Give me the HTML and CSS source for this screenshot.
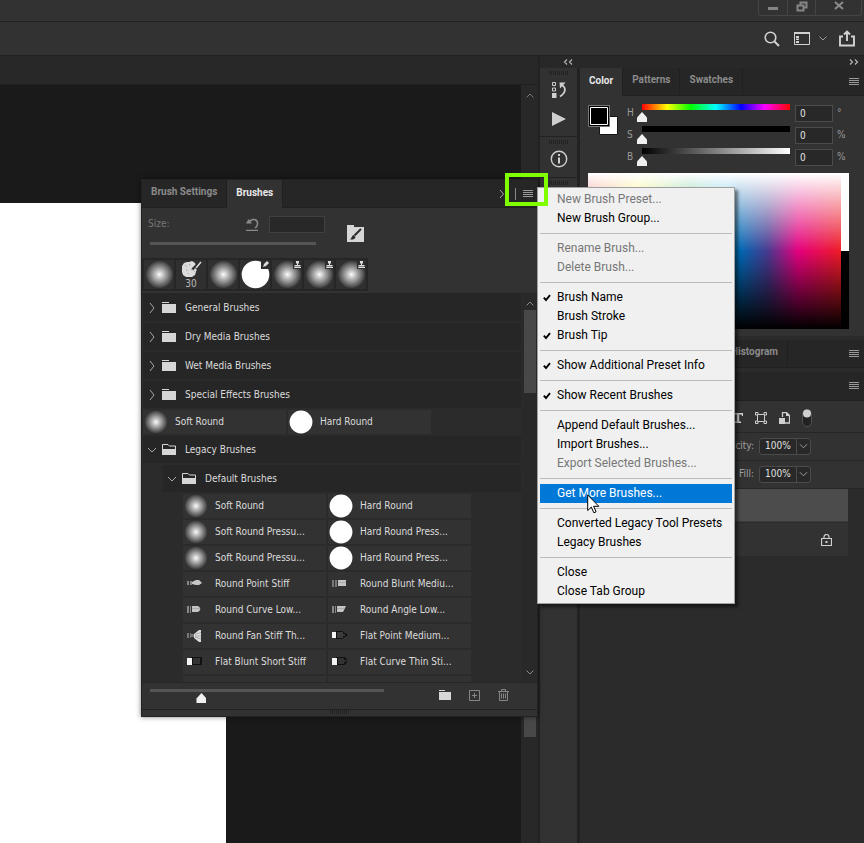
FILE: index.html
```html
<!DOCTYPE html>
<html lang="en">
<head>
<meta charset="utf-8">
<title>Brushes</title>
<link rel="stylesheet" href="styles.css">
</head>
<body>
<svg class="defs" aria-hidden="true">
  <defs>
    <radialGradient id="soft"><stop offset="0" stop-color="#fff"/><stop offset=".15" stop-color="#ddd"/><stop offset=".6" stop-color="#888"/><stop offset="1" stop-color="#3c3c3c"/></radialGradient>
    <symbol id="lines" viewBox="0 0 10 8"><path d="M0 .5h10M0 2.5h10M0 4.5h10M0 6.5h10" stroke="#9a9a9a" fill="none"/></symbol>
    <symbol id="folder" viewBox="0 0 14 12"><path d="M0 2h14v9H0z" fill="#d6d6d6"/><path d="M0 .5h7" stroke="#d6d6d6"/></symbol>
    <symbol id="folder-open" viewBox="0 0 14 12"><path d="M.5 5.500V.5H6l1.500 1.500h6v4" fill="none" stroke="#d6d6d6"/><path d="M0 5h14v6H0z" fill="#d6d6d6"/></symbol>
    <symbol id="right" viewBox="0 0 6 10"><path d="M1 0l4 5-4 5" fill="none" stroke="#a8a8a8"/></symbol>
    <symbol id="down" viewBox="0 0 10 6"><path d="M1 1l4 4 4-4" fill="none" stroke="#a8a8a8"/></symbol>
    <symbol id="check" viewBox="0 0 8 8"><path d="M.8 3.600L3 6l4-4.800" fill="none" stroke="#000" stroke-width="1.900"/></symbol>
    <symbol id="ball" viewBox="0 0 30 30"><circle cx="15" cy="15" r="14" fill="url(#soft)"/></symbol>
    <symbol id="disc" viewBox="0 0 30 30"><circle cx="15" cy="15" r="14.300" fill="#fff"/></symbol>
    <symbol id="stamp" viewBox="0 0 9 9"><path d="M0 0h9v9H0z" fill="#2e2e2e"/><path d="M3 1h3v2l-1 1v1h2.500v1.500h-6V5H4V4L3 3zM1 7h7v1H1z" fill="#ddd"/></symbol>
    <symbol id="dual" viewBox="0 0 10 6"><path d="M1 .5L3.500 3 1 5.500M6 .5L8.500 3 6 5.500" fill="none" stroke="#b5b5b5" stroke-width="1.200"/></symbol>
  </defs>
</svg>

<header class="titlebar">
  <div class="win">
    <button aria-label="Minimize"><svg width="12" height="10"><path d="M1 6h10v3H1z" fill="#858585"/></svg></button>
    <button aria-label="Restore"><svg width="12" height="11"><path d="M4.500 4V1.500h6v5H8M1.500 4.500h6v5h-6z" fill="none" stroke="#858585" stroke-width="2"/></svg></button>
    <button aria-label="Close"><svg width="10" height="10"><path d="M1 1l8 7M9 1L1 8" stroke="#8b8b8b" stroke-width="2"/></svg></button>
  </div>
</header>
<div class="options">
  <button aria-label="Search"><svg width="16" height="16"><circle cx="6.500" cy="6.500" r="5.300" fill="none" stroke="#d2d2d2" stroke-width="1.600"/><path d="M10.500 10.500L15 15" stroke="#d2d2d2" stroke-width="2"/></svg></button>
  <button aria-label="Workspace"><svg width="16" height="13"><path d="M.5.5h15v12H.5z" fill="none" stroke="#d2d2d2"/><path d="M0 0h16v2H0zM2 4h3v2H2zM2 6.500h3v1.500H2zM2 9h3v2H2z" fill="#d2d2d2"/></svg></button>
  <button aria-label="Workspace list" class="tight"><svg width="8" height="5"><path d="M.5.5L4 4 7.500.5" fill="none" stroke="#9b9b9b"/></svg></button>
  <button aria-label="Share"><svg width="16" height="17"><path d="M4 6.500H1V15.500h14V6.500h-3M8 11V2M5 4.500L8 1.500l3 3" fill="none" stroke="#d2d2d2" stroke-width="1.900"/></svg></button>
</div>

<div class="workspace">
  <main class="doc">
    <div class="doctabs"></div>
    <div class="stage">
      <div class="paste"><div class="canvas"></div></div>
      <div class="vscroll"><svg width="8" height="5"><path d="M.5 4.500L4 1l3.500 3.500" fill="none" stroke="#777"/></svg><i></i></div>
    </div>
  </main>

  <div class="side">
    <div class="sidehead">
      <button aria-label="Expand"><svg class="flip" width="10" height="6"><use href="#dual"/></svg></button>
      <button aria-label="Collapse"><svg width="10" height="6"><use href="#dual"/></svg></button>
    </div>
    <div class="sidebody">
      <nav class="dock">
        <div class="dockgroup">
          <span class="grip"></span>
          <button aria-label="History"><svg width="16" height="18"><path d="M1.500 1.500h3v3h-3zM1.500 7h3v3h-3z" fill="none" stroke="#cfcfcf"/><path d="M1 12h4.500v5H1zM8.500 1.500h6L9 7.500z" fill="#cfcfcf"/><path d="M10.500 4c4.500 2 5 7.500-1.500 11.500" fill="none" stroke="#cfcfcf" stroke-width="1.800"/></svg></button>
          <button aria-label="Actions"><svg width="14" height="14"><path d="M0 0l14 7-14 7z" fill="#cfcfcf"/></svg></button>
        </div>
        <div class="dockgroup">
          <span class="grip"></span>
          <button aria-label="Info"><svg width="18" height="18"><circle cx="9" cy="9" r="7.700" fill="none" stroke="#cfcfcf" stroke-width="1.400"/><path d="M8 4h2v2H8zM8 7.500h2v6H8z" fill="#cfcfcf"/></svg></button>
        </div>
        <div class="dockgroup"><span class="grip"></span></div>
      </nav>

      <aside class="panels">
        <div class="tabs">
          <button class="tab on">Color</button><button class="tab">Patterns</button><button class="tab">Swatches</button>
          <button class="more" aria-label="Panel menu"><svg width="10" height="8"><use href="#lines"/></svg></button>
        </div>
        <section class="color">
          <div class="hsb">
            <svg class="swatch" width="32" height="32"><path d="M11.500 11.500h18v18h-18z" fill="#fff" stroke="#161616"/><path d="M.5.5h21v21H.5z" fill="#000" stroke="#777"/><path d="M2.500 2.500h17v17h-17z" fill="#000" stroke="#fff"/></svg>
            <div class="rows">
              <div class="row"><label for="h">H</label><input id="h" class="hue" type="range" value="0"><input type="text" value="0" aria-label="Hue"><span>°</span></div>
              <div class="row"><label for="s">S</label><input id="s" class="sat" type="range" value="0"><input type="text" value="0" aria-label="Saturation"><span>%</span></div>
              <div class="row"><label for="b">B</label><input id="b" class="bri" type="range" value="0"><input type="text" value="0" aria-label="Brightness"><span>%</span></div>
            </div>
          </div>
          <div class="picker"><div class="spectrum"></div><div class="bw"></div></div>
        </section>
        <div class="tabs second">
          <button class="tab hist">Histogram</button>
          <button class="more" aria-label="Panel menu"><svg width="10" height="8"><use href="#lines"/></svg></button>
        </div>
        <div class="tabs third">
          <button class="more" aria-label="Panel menu"><svg width="10" height="8"><use href="#lines"/></svg></button>
        </div>
        <section class="layers">
          <div class="filters">
            <svg width="10" height="10"><path d="M0 0h10v3H9L8.500 1.500H6.200V8.500H8V10H2V8.500h1.800V1.500H1.500L1 3H0z" fill="#cfcfcf"/></svg>
            <svg width="12" height="12"><path d="M2.500 2.500h7v7h-7z" fill="none" stroke="#cfcfcf"/><path d="M.5.5h2.500v2.500H.5zM9 .5h2.500v2.500H9zM.5 9h2.500v2.500H.5zM9 9h2.500v2.500H9z" fill="#323232" stroke="#cfcfcf"/></svg>
            <svg width="11" height="12"><path d="M3.500 5V.5h4l3 3v7.500H6" fill="none" stroke="#cfcfcf" stroke-width="1.300"/><path d="M0 6h6v6H0zM7 0v4h4z" fill="#cfcfcf"/></svg>
            <svg width="10" height="18"><rect x=".5" y=".5" width="9" height="17" rx="4.500" fill="#222" stroke="#505050"/><circle cx="5" cy="4.500" r="4" fill="#d0d0d0"/></svg>
          </div>
          <div class="amount"><label for="op">Opacity:</label><div class="combo"><input id="op" type="text" value="100%"><button aria-label="Opacity slider"><svg width="9" height="6"><use href="#down"/></svg></button></div></div>
          <div class="amount"><label for="fi">Fill:</label><div class="combo"><input id="fi" type="text" value="100%"><button aria-label="Fill slider"><svg width="9" height="6"><use href="#down"/></svg></button></div></div>
          <div class="layerlist">
            <div class="layer sel"></div>
            <div class="layer"><svg width="11" height="12"><path d="M.5 4.500h10v7H.5zM3 4.500V3a2.500 2.500 0 0 1 5 0v1.500" fill="none" stroke="#d0d0d0" stroke-width="1.200"/><path d="M4.500 7h2v2h-2z" fill="#d0d0d0"/></svg></div>
          </div>
        </section>
      </aside>
    </div>
  </div>
</div>

<section class="brushes">
  <div class="tabs">
    <button class="tab">Brush Settings</button><button class="tab on">Brushes</button>
    <div class="tools"><svg width="9" height="8" viewBox="0 0 9 8"><path d="M1 0l3.500 4L1 8M6.500 1.500V2M6.500 6v.5" fill="none" stroke="#a8a8a8"/></svg><b></b><button aria-label="Brushes menu"><svg width="10" height="8"><use href="#lines"/></svg></button></div>
  </div>
  <div class="size">
    <div class="sizeleft">
      <div class="sizerow"><label for="sz">Size:</label><svg width="13" height="13"><path d="M2.500 4.500C6-.5 12 1 11.500 6c0 2-1 3-2.500 4M0 12.500h12" fill="none" stroke="#8a8a8a" stroke-width="1.500"/><path d="M0 5.500h6L2.500 1z" fill="#8a8a8a"/></svg><input id="sz" type="text" disabled></div>
      <div class="bar"></div>
    </div>
    <button aria-label="Toggle brush settings"><svg width="17" height="18"><path d="M0 1h7v2h10v15H0z" fill="#d6d6d6"/><path d="M14 5L7.500 11.500" stroke="#2c2c2c" stroke-width="2"/><path d="M3 15.500c2 0 5 .5 5.500-2.500L6.500 11c-2 .5-1.500 3-3.500 4.500z" fill="#2c2c2c"/></svg></button>
  </div>
  <div class="recent">
    <button aria-label="Soft Round"><svg width="29" height="29"><use href="#ball"/></svg></button>
    <button class="num"><svg width="22" height="17" viewBox="0 0 22 17"><path d="M4 2l3-1 2 0 3-1 3 2 1 3 0 3 0 3-1 3-3 2-3 0-3 0-3-2-1-3 0-3 0-3z" fill="#dcdcdc"/><path d="M5 4.500l1.500 1M9.500 3l.5 1.500M6 9.500l1.500-.5M11 8l1 1.500M8 13l.5-1" stroke="#a5a5a5"/><path d="M13 9l8-8" stroke="#2e2e2e" stroke-width="4"/><path d="M21 1l-5 6" stroke="#ddd" stroke-width="1.500"/><path d="M13 10l2-3 2 2-1 1z" fill="#ddd"/></svg>30</button>
    <button aria-label="Soft Round"><svg width="29" height="29"><use href="#ball"/></svg></button>
    <button aria-label="Hard Round"><svg width="29" height="29"><use href="#disc"/><path d="M20 0h9v9h-9z" fill="#2e2e2e"/><path d="M22 7l1-3 3-3 2 2-3 3z" fill="#ddd"/></svg></button>
    <button aria-label="Soft Round"><svg width="29" height="29"><use href="#ball"/><use href="#stamp" x="20" width="9" height="9"/></svg></button>
    <button aria-label="Soft Round"><svg width="29" height="29"><use href="#ball"/><use href="#stamp" x="20" width="9" height="9"/></svg></button>
    <button aria-label="Soft Round"><svg width="29" height="29"><use href="#ball"/><use href="#stamp" x="20" width="9" height="9"/></svg></button>
  </div>
  <div class="listwrap">
    <div class="list">
      <button class="group"><svg class="arrow" width="10" height="10"><use href="#right" width="6" height="10" x="2"/></svg><svg width="14" height="12"><use href="#folder"/></svg>General Brushes</button>
      <button class="group"><svg class="arrow" width="10" height="10"><use href="#right" width="6" height="10" x="2"/></svg><svg width="14" height="12"><use href="#folder"/></svg>Dry Media Brushes</button>
      <button class="group"><svg class="arrow" width="10" height="10"><use href="#right" width="6" height="10" x="2"/></svg><svg width="14" height="12"><use href="#folder"/></svg>Wet Media Brushes</button>
      <button class="group"><svg class="arrow" width="10" height="10"><use href="#right" width="6" height="10" x="2"/></svg><svg width="14" height="12"><use href="#folder"/></svg>Special Effects Brushes</button>
      <div class="grid">
        <button><svg width="24" height="24"><use href="#ball"/></svg>Soft Round</button><button><svg width="24" height="24"><use href="#disc"/></svg>Hard Round</button>
      </div>
      <button class="group"><svg class="arrow" width="10" height="6"><use href="#down"/></svg><svg width="14" height="12"><use href="#folder-open"/></svg>Legacy Brushes</button>
      <button class="group sub"><svg class="arrow" width="10" height="6"><use href="#down"/></svg><svg width="14" height="12"><use href="#folder-open"/></svg>Default Brushes</button>
      <div class="grid nested">
        <button><svg width="24" height="24"><use href="#ball"/></svg>Soft Round</button><button><svg width="24" height="24"><use href="#disc"/></svg>Hard Round</button>
        <button><svg width="24" height="24"><use href="#ball"/></svg>Soft Round Pressu...</button><button><svg width="24" height="24"><use href="#disc"/></svg>Hard Round Press...</button>
        <button><svg width="24" height="24"><use href="#ball"/></svg>Soft Round Pressu...</button><button><svg width="24" height="24"><use href="#disc"/></svg>Hard Round Press...</button>
        <button><svg width="24" height="24"><path d="M3 9h2v4H3zM6 9h2v4H6z" fill="#888"/><path d="M8 10l4-2h3l3 3-3 2h-3l-4-1z" fill="#c8c8c8"/></svg>Round Point Stiff</button><button><svg width="24" height="24"><path d="M3 8h2v7H3zM6 8h2v7H6z" fill="#777"/><path d="M9 8h8v6H9z" fill="#c4c4c4"/><path d="M9 10.500h8" stroke="#aaa"/></svg>Round Blunt Mediu...</button>
        <button><svg width="24" height="24"><path d="M3 8h2v7H3zM6 8h1v7H6z" fill="#888"/><path d="M8 8h6c3 2 3 4 0 6H8z" fill="#c4c4c4"/><path d="M8 10.500h8" stroke="#aaa"/></svg>Round Curve Low...</button><button><svg width="24" height="24"><path d="M3 8h2v7H3zM6 8h1v7H6z" fill="#888"/><path d="M8 8h9l-3 6H8z" fill="#c4c4c4"/><path d="M8 10.500h8" stroke="#aaa"/></svg>Round Angle Low...</button>
        <button><svg width="24" height="24"><path d="M3 9h2v5H3zM6 9h1v5H6zM7 10h4v3H7z" fill="#777"/><path d="M10 10l5-4h2v12h-2l-5-4z" fill="#ddd"/><path d="M11 10.500l6-2M11 12h6M11 13l6 2" stroke="#aaa"/></svg>Round Fan Stiff Th...</button><button><svg width="24" height="24"><path d="M7 7h6l6 4-6 4H7z" fill="#111"/><path d="M8 9h6M8 11h8M8 13h6" stroke="#666"/><path d="M3 8h4v6H3z" fill="#f4f4f4"/></svg>Flat Point Medium...</button>
        <button><svg width="24" height="24"><path d="M7 7h11v8H7z" fill="#111"/><path d="M9 9h7M9 11h7M9 13h7" stroke="#555"/><path d="M3 8h5v7H3z" fill="#f4f4f4"/></svg>Flat Blunt Short Stiff</button><button><svg width="24" height="24"><path d="M7 7h8c4 1 4 7 0 8H7z" fill="#111"/><path d="M9 9h6M9 11h8M9 13h6" stroke="#555"/><path d="M3 8h5v7H3z" fill="#f4f4f4"/></svg>Flat Curve Thin Sti...</button>
        <button></button><button></button>
      </div>
    </div>
    <div class="vscroll2"><svg width="8" height="5"><path d="M.5 4.500L4 1l3.500 3.500" fill="none" stroke="#888"/></svg><i></i><svg width="8" height="5"><path d="M.5.5L4 4 7.500.5" fill="none" stroke="#888"/></svg></div>
  </div>
  <div class="foot">
    <input type="range" value="22" aria-label="Preview size">
    <div class="acts">
      <button aria-label="New group"><svg width="12" height="11" viewBox="0 0 12 11"><path d="M0 2h12v8H0z" fill="#d6d6d6"/><path d="M0 .5h6" stroke="#d6d6d6"/></svg></button>
      <button aria-label="New brush"><svg width="11" height="11"><path d="M.5.5h10v10H.5zM5.500 3v5M3 5.500h5" fill="none" stroke="#868686"/></svg></button>
      <button aria-label="Delete brush"><svg width="11" height="12"><path d="M0 2.500h11M3.500 2V.5h4V2M1.500 3v8.500h8V3M3.500 4.500v5M5.500 4.500v5M7.500 4.500v5" fill="none" stroke="#868686"/></svg></button>
    </div>
  </div>
  <div class="resize"><span class="grip"></span></div>
</section>

<div class="menu" role="menu">
  <button disabled>New Brush Preset...</button>
  <button>New Brush Group...</button>
  <hr>
  <button disabled>Rename Brush...</button>
  <button disabled>Delete Brush...</button>
  <hr>
  <button><svg width="8" height="8"><use href="#check"/></svg>Brush Name</button>
  <button>Brush Stroke</button>
  <button><svg width="8" height="8"><use href="#check"/></svg>Brush Tip</button>
  <hr>
  <button><svg width="8" height="8"><use href="#check"/></svg>Show Additional Preset Info</button>
  <hr>
  <button><svg width="8" height="8"><use href="#check"/></svg>Show Recent Brushes</button>
  <hr>
  <button>Append Default Brushes...</button>
  <button>Import Brushes...</button>
  <button disabled>Export Selected Brushes...</button>
  <hr>
  <button class="hot">Get More Brushes...</button>
  <hr>
  <button>Converted Legacy Tool Presets</button>
  <button>Legacy Brushes</button>
  <hr>
  <button>Close</button>
  <button>Close Tab Group</button>
</div>
<div class="marker"></div>
<svg class="cursor" width="13" height="20"><path d="M.7.9v15.600l3.600-3.400 2.600 5.700 2.200-1-2.500-5.500h5.200z" fill="#fff" stroke="#000"/></svg>
</body>
</html>
```
FILE: styles.css
```css
* { box-sizing: border-box; }
body {
  margin: 0;
  min-height: 100vh;
  display: flex;
  flex-direction: column;
  position: relative;
  overflow: hidden;
  background: #323232;
  color: #dcdcdc;
  font: 10px/14px "DejaVu Sans Condensed", "Open Sans", sans-serif;
}
button, input { font: inherit; color: inherit; }
button { background: none; border: 0; padding: 0; }
svg { display: block; flex: none; }
.defs { position: absolute; width: 0; height: 0; }

.titlebar { height: 22px; border-bottom: 1px solid #222; display: flex; justify-content: flex-end; }
.win { display: flex; height: 16px; margin-right: 2px; border: 1px solid #454545; border-top: 0; border-radius: 0 0 3px 3px; }
.win button { width: 28px; display: flex; justify-content: center; align-items: center; }
.win button + button { border-left: 1px solid #454545; }
.win button:last-child { width: 46px; }
.win svg { margin-bottom: 3px; }

.options { height: 33px; display: flex; align-items: center; justify-content: flex-end; gap: 14px; padding-right: 9px; }
.options button + .tight { margin-left: -5px; }
.options .tight + button { margin-left: -2px; }

.workspace { flex: 1; display: flex; background: #222; }
.doc { flex: 1; display: flex; flex-direction: column; background: #282828; }
.doctabs { height: 30px; border-top: 1px solid #202020; border-bottom: 1px solid #202020; }
.stage { flex: 1; display: flex; }
.paste { flex: 1; background: #1a1a1a; display: flex; padding-top: 118px; }
.canvas { width: 226px; background: #fff; }
.vscroll { width: 17px; display: flex; flex-direction: column; align-items: center; padding: 8px 0 106px; }
.vscroll i { width: 12px; height: 60px; margin-top: auto; background: #484848; }

.side { width: 324px; margin-left: 2px; display: flex; flex-direction: column; }
.sidehead { height: 13px; background: #282828; border-top: 1px solid #202020; display: flex; justify-content: space-between; align-items: center; padding: 0 5px 0 23px; }
.flip { transform: scaleX(-1); }
.sidebody { flex: 1; display: flex; gap: 3px; }
.dock { width: 37px; background: #323232; }
.dockgroup { display: flex; flex-direction: column; align-items: center; gap: 13px; padding: 3px 0 10px; border-bottom: 1px solid #222; }
.dockgroup + .dockgroup { gap: 6px; padding-bottom: 9px; }
.dockgroup:last-child { border: 0; }
.dockgroup .grip + button { margin-top: -7px; }
.dockgroup + .dockgroup .grip + button { margin-top: 0; }
.grip { width: 19px; height: 4px; background: repeating-linear-gradient(90deg, #222 0 1px, #323232 1px 2px); }

.panels { flex: 1; background: #2b2b2b; display: flex; flex-direction: column; }
.tabs { display: flex; height: 28px; background: #262626; border-bottom: 1px solid #202020; font-family: Roboto, sans-serif; }
.tab { font-weight: 700; color: #8b8b8b; padding: 0 9px 3px; border-right: 1px solid #202020; }
.tab.on { background: #323232; color: #e8e8e8; margin-bottom: -1px; }
.more { margin-left: auto; padding-right: 5px; }
.color { background: #323232; padding: 8px 15px 7px 8px; }
.hsb { display: flex; height: 69px; }
.swatch { margin-top: 1px; }
.rows { flex: 1; display: flex; flex-direction: column; gap: 4px; padding-left: 7px; margin-right: -8px; }
.row { display: flex; align-items: center; height: 18px; color: #9c9c9c; }
.row label { width: 10px; }
.row input[type=range] { flex: 1; min-width: 0; }
.row input[type=text] { width: 38px; height: 17px; background: #282828; border: 1px solid #4b4b4b; padding: 0 4px; color: #e4e4e4; }
.row span { width: 20px; margin-left: 4px; }
input[type=range] { appearance: none; height: 18px; margin: 0; background: var(--track) 5px 0 / calc(100% - 10px) 6px no-repeat; }
input[type=range]::-webkit-slider-thumb { appearance: none; width: 10px; height: 10px; margin-top: 8px; background: #f0f0f0; clip-path: polygon(50% 0, 100% 55%, 100% 100%, 0 100%, 0 55%); }
.hue { --track: linear-gradient(90deg, red, #ff0 17%, #0f0 33%, #0ff 50%, #00f 67%, #f0f 83%, red); }
.sat { --track: linear-gradient(#000, #000); }
.bri { --track: linear-gradient(90deg, #000, #fff); }
.picker { display: flex; height: 156px; }
.spectrum { flex: 1; background:
  linear-gradient(#fff, rgba(255,255,255,0) 50%, rgba(0,0,0,0) 50%, #000),
  linear-gradient(90deg, #e8242a, #fff100 20%, #00a04a 40%, #00a0e0 53%, #0068b4 60%, #483a90 71%, #e4007f 83%, #ed1c24); }
.bw { width: 8px; background: linear-gradient(#fff 50%, #000 50%); }
.second { margin-top: 4px; }
.third { margin-top: 4px; height: 29px; }
.hist { margin-left: 142px; }
.filters { height: 32px; background: #323232; border-bottom: 1px solid #262626; display: flex; align-items: center; justify-content: flex-end; gap: 12px; padding: 3px 52px 0 0; }
.amount { height: 28px; background: #323232; border-bottom: 1px solid #262626; display: flex; align-items: center; justify-content: flex-end; gap: 5px; padding: 0 53px 1px 0; color: #a0a0a0; }
.combo { display: flex; height: 17px; border: 1px solid #4b4b4b; border-radius: 3px; background: #282828; color: #e0e0e0; }
.combo input { width: 36px; padding: 0 0 0 5px; border: 0; background: none; }
.combo button { width: 14px; border-left: 1px solid #4b4b4b; display: grid; place-items: center; }
.layerlist { margin-right: 16px; }
.layer { height: 33px; background: #323232; display: flex; align-items: center; justify-content: flex-end; padding-right: 16px; }
.sel { background: #4c4c4c; border-bottom: 1px solid #3c3c3c; margin-bottom: 1px; }

.brushes { position: absolute; left: 141px; top: 179px; width: 397px; background: #323232; border: 1px solid #222; box-shadow: 0 0 5px rgba(0,0,0,.5); }
.tools { margin-left: auto; display: flex; align-items: center; padding-right: 4px; gap: 7px; }
.tools b { width: 1px; height: 12px; background: #8a8a8a; }
.size { display: flex; gap: 22px; height: 50px; padding: 7px 0 0 6px; }
.size > button { align-self: flex-start; margin-top: 9px; }
.sizeleft { width: 177px; }
.sizerow { display: flex; align-items: center; height: 18px; color: #777; }
.sizerow svg { margin-left: auto; margin-right: 10px; }
.sizerow input { width: 56px; height: 17px; border: 1px solid #404040; background: #282828; }
.bar { width: 166px; height: 3px; margin: 9px 2px; background: #555; }
.recent { display: flex; gap: 2px; width: 226px; height: 33px; padding: 2px; background: #262626; }
.recent button { flex: 1; display: grid; place-items: center; background: #303030; }
.recent .num { line-height: 10px; color: #b8b8b8; }
.listwrap { display: flex; margin-top: 2px; height: 390px; overflow: hidden; border-top: 1px solid #262626; border-bottom: 1px solid #262626; background: #2b2b2b; }
.list { flex: 1; display: flex; flex-direction: column; gap: 2px; padding-left: 1px; }
.group { flex: none; display: flex; align-items: center; height: 27px; padding-left: 4px; background: #262626; }
.group .arrow { margin-right: 5px; }
.group svg + svg { margin-right: 9px; }
.sub { margin-left: 20px; }
.grid { display: grid; grid-template-columns: 143px 143px; grid-auto-rows: 24px; gap: 2px; }
.nested { margin-left: 40px; }
.grid button { display: flex; align-items: center; gap: 7px; padding-left: 1px; background: #323232; white-space: nowrap; overflow: hidden; }
.vscroll2 { width: 15px; margin-left: 1px; display: flex; flex-direction: column; align-items: center; padding: 7px 0; background: #292929; }
.vscroll2 i { width: 12px; height: 83px; margin: 4px 0 auto; background: #484848; }
.foot { display: flex; justify-content: space-between; height: 26px; padding: 6px 28px 0 3px; --track: linear-gradient(#555, #555); }
.foot input[type=range] { width: 244px; height: 14px; background-size: calc(100% - 10px) 3px; }
.foot input::-webkit-slider-thumb { margin-top: 4px; }
.acts { display: flex; align-items: center; gap: 18px; height: 12px; }
.resize { height: 7px; border-top: 1px solid #222; display: flex; justify-content: center; }

.menu { position: absolute; left: 537px; top: 187px; width: 198px; padding: 2px; border: 1px solid #a0a0a0; background: #f0f0f0; box-shadow: 3px 3px 3px rgba(0,0,0,.5); color: #000; font: 12px/19px Roboto, sans-serif; }
.menu button { display: flex; align-items: center; width: 100%; height: 19px; padding-left: 17px; white-space: nowrap; }
.menu svg { margin: 0 6px 0 -14px; }
.menu button:disabled { color: #777; }
.menu .hot { background: #0078d7; color: #fff; }
.menu hr { height: 1px; margin: 5px 0; border: 0; background: #bbb; }
.marker { position: absolute; left: 505px; top: 173px; width: 43px; height: 33px; border: 4px solid #80ff00; }
.cursor { position: absolute; left: 587px; top: 494px; }
```
